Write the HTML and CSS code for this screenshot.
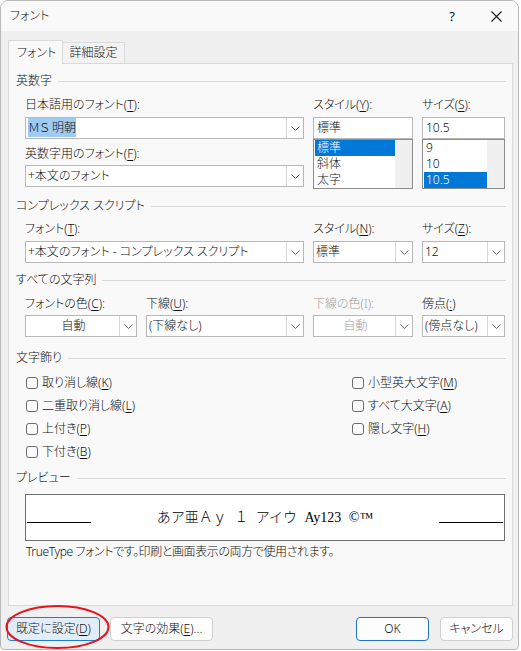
FILE: index.html
```html
<!DOCTYPE html>
<html lang="ja">
<head>
<meta charset="utf-8">
<title>フォント</title>
<link rel="stylesheet" href="styles.css">
</head>
<body>
<div class="window">
  <div class="titlebar">
    <span class="title">フォント</span>
    <span class="tbtn help">?</span>
    <span class="tbtn close"><svg width="11" height="11" viewBox="0 0 11 11"><path d="M0.5 0.5 L10.5 10.5 M10.5 0.5 L0.5 10.5" stroke="#1a1a1a" stroke-width="1.1" fill="none"/></svg></span>
  </div>

  <div class="tabs">
    <div class="tab active">フォント</div>
    <div class="tab">詳細設定</div>
  </div>

  <div class="panel">
    <div class="section-head s1"><span>英数字</span><i class="rule"></i></div>
    <div class="grid g1">
      <label class="wide">日本語用のフォント(<u>T</u>):</label>
      <label>スタイル(<u>Y</u>):</label>
      <label>サイズ(<u>S</u>):</label>

      <div class="combo wide"><span class="val"><span class="sel">ＭＳ 明朝</span></span><span class="btn"><svg width="9" height="5" viewBox="0 0 9 5"><path d="M0.5 0.5 L4.5 4.5 L8.5 0.5" stroke="#666" fill="none"/></svg></span></div>
      <div class="edit">標準</div>
      <div class="edit">10.5</div>

      <label class="wide lbl2">英数字用のフォント(<u>F</u>):</label>
      <div class="list c3"><div class="items"><div class="item on">標準</div><div class="item">斜体</div><div class="item">太字</div></div><div class="scroll"></div></div>
      <div class="list c4"><div class="items"><div class="item">9</div><div class="item">10</div><div class="item on">10.5</div></div><div class="scroll"></div></div>

      <div class="combo wide r4"><span class="val">+本文のフォント</span><span class="btn"><svg width="9" height="5" viewBox="0 0 9 5"><path d="M0.5 0.5 L4.5 4.5 L8.5 0.5" stroke="#666" fill="none"/></svg></span></div>
    </div>

    <div class="section-head s2"><span>コンプレックス スクリプト</span><i class="rule"></i></div>
    <div class="grid g2">
      <label class="wide">フォント(<u>T</u>):</label>
      <label>スタイル(<u>N</u>):</label>
      <label>サイズ(<u>Z</u>):</label>
      <div class="combo wide"><span class="val">+本文のフォント - コンプレックス スクリプト</span><span class="btn"><svg width="9" height="5" viewBox="0 0 9 5"><path d="M0.5 0.5 L4.5 4.5 L8.5 0.5" stroke="#666" fill="none"/></svg></span></div>
      <div class="combo"><span class="val">標準</span><span class="btn"><svg width="9" height="5" viewBox="0 0 9 5"><path d="M0.5 0.5 L4.5 4.5 L8.5 0.5" stroke="#666" fill="none"/></svg></span></div>
      <div class="combo"><span class="val">12</span><span class="btn"><svg width="9" height="5" viewBox="0 0 9 5"><path d="M0.5 0.5 L4.5 4.5 L8.5 0.5" stroke="#666" fill="none"/></svg></span></div>
    </div>

    <div class="section-head s3"><span>すべての文字列</span><i class="rule"></i></div>
    <div class="grid g3">
      <label>フォントの色(<u>C</u>):</label>
      <label>下線(<u>U</u>):</label>
      <label class="disabled">下線の色(I):</label>
      <label>傍点(<u>:</u>)</label>
      <div class="combo"><span class="val center">自動</span><span class="btn"><svg width="9" height="5" viewBox="0 0 9 5"><path d="M0.5 0.5 L4.5 4.5 L8.5 0.5" stroke="#666" fill="none"/></svg></span></div>
      <div class="combo"><span class="val">(下線なし)</span><span class="btn"><svg width="9" height="5" viewBox="0 0 9 5"><path d="M0.5 0.5 L4.5 4.5 L8.5 0.5" stroke="#666" fill="none"/></svg></span></div>
      <div class="combo disabled"><span class="val center">自動</span><span class="btn"><svg width="9" height="5" viewBox="0 0 9 5"><path d="M0.5 0.5 L4.5 4.5 L8.5 0.5" stroke="#666" fill="none"/></svg></span></div>
      <div class="combo"><span class="val">(傍点なし)</span><span class="btn"><svg width="9" height="5" viewBox="0 0 9 5"><path d="M0.5 0.5 L4.5 4.5 L8.5 0.5" stroke="#666" fill="none"/></svg></span></div>
    </div>

    <div class="section-head s4"><span>文字飾り</span><i class="rule"></i></div>
    <div class="checks">
      <div class="check"><i class="box"></i>取り消し線(<u>K</u>)</div>
      <div class="check"><i class="box"></i>二重取り消し線(<u>L</u>)</div>
      <div class="check"><i class="box"></i>上付き(<u>P</u>)</div>
      <div class="check"><i class="box"></i>下付き(<u>B</u>)</div>
      <div class="check"><i class="box"></i>小型英大文字(<u>M</u>)</div>
      <div class="check"><i class="box"></i>すべて大文字(<u>A</u>)</div>
      <div class="check"><i class="box"></i>隠し文字(<u>H</u>)</div>
    </div>

    <div class="section-head s5"><span>プレビュー</span><i class="rule"></i></div>
    <div class="preview">
      <i class="pline"></i>
      <span class="ptext">あア亜Ａｙ １ アイウ Ay123 ©™</span>
      <i class="pline"></i>
    </div>
    <div class="desc">TrueType フォントです。印刷と画面表示の両方で使用されます。</div>
  </div>

  <div class="footer">
    <button class="b-default">既定に設定(<u>D</u>)</button>
    <button class="b-effect">文字の効果(<u>E</u>)...</button>
    <span class="spacer"></span>
    <button class="b-ok">OK</button>
    <button class="b-cancel">キャンセル</button>
  </div>

  <svg class="mark" width="108" height="48" viewBox="0 0 108 48"><ellipse cx="53.5" cy="23" rx="51" ry="21" stroke="#e8141c" stroke-width="2" fill="none"/></svg>
</div>
</body>
</html>
```

FILE: styles.css
```css
* { box-sizing: border-box; }
html, body { margin: 0; padding: 0; }
body {
  background: #ffffff;
  font-family: "Noto Sans", "Noto Sans CJK JP", sans-serif;
  font-feature-settings: "palt";
  font-size: 12px;
  font-weight: 300;
  line-height: 16px;
  color: #111111;
  width: 521px;
  height: 651px;
  overflow: hidden;
}
u { text-decoration: underline; text-underline-offset: 2px; text-decoration-thickness: 1px; }

.window {
  position: relative;
  width: 519px;
  height: 650px;
  border: 1px solid #b9b9b9;
  border-radius: 8px 8px 4px 4px;
  background: #f0f0f0;
  overflow: hidden;
  display: flex;
  flex-direction: column;
}

.titlebar {
  height: 30px;
  background: #f9f9f9;
  display: flex;
  align-items: center;
}
.title { flex: 1; padding-left: 9px; }
.tbtn { width: 42px; height: 30px; display: flex; align-items: center; justify-content: center; }
.help { font-size: 13px; margin-right: 2px; font-weight: 400; }
.close { margin-right: 1px; }

.tabs {
  margin-top: 9px;
  margin-left: 7px;
  display: flex;
  align-items: flex-end;
  height: 23px;
}
.tab {
  height: 21px;
  width: 62px;
  border: 1px solid #dcdcdc;
  border-left: none;
  border-bottom: none;
  background: #f3f3f3;
  line-height: 20px;
  text-align: center;
  white-space: nowrap;
}
.tab.active {
  width: 55px;
  height: 24px;
  margin-bottom: -1px;
  background: #f9f9f9;
  border: 1px solid #d9d9d9;
  border-bottom: none;
  text-align: left;
  padding-left: 8px;
  line-height: 23px;
  position: relative;
  z-index: 1;
}

.panel {
  margin-left: 7px;
  width: 505px;
  height: 543px;
  border: 1px solid #d9d9d9;
  background: #f9f9f9;
  padding: 9px 6px 0 7px;
  display: flex;
  flex-direction: column;
}

.section-head {
  height: 16px;
  display: flex;
  align-items: center;
  white-space: nowrap;
}
.section-head .rule {
  flex: 1;
  height: 1px;
  background: #dadada;
  margin-left: 6px;
}
.s2 { margin-top: 11px; }
.s3 { margin-top: 9px; }
.s4 { margin-top: 13px; }
.s5 { margin-top: 10px; }

.grid {
  margin-left: 9px;
  width: 480px;
  display: grid;
  grid-template-columns: 112px 158px 100px 83px;
  column-gap: 9px;
}
.grid label { display: block; height: 16px; white-space: nowrap; }
.wide { grid-column: 1 / 3; }
.g1 { margin-top: 8px; grid-template-rows: 20px 22px 26px 22px; }
.g1 .lbl2 { grid-row: 3; align-self: end; margin-bottom: 3px; }
.g1 .c3 { grid-column: 3; grid-row: 3 / 5; }
.g1 .c4 { grid-column: 4; grid-row: 3 / 5; }
.g1 .r4 { grid-row: 4; }
.g2 { margin-top: 7px; grid-template-rows: 20px 22px; }
.g3 { margin-top: 8px; grid-template-rows: 19px 22px; }
.disabled { color: #a0a0a0; }

.combo {
  height: 22px;
  border: 1px solid #b8b8b8;
  background: #ffffff;
  display: flex;
}
.combo .val {
  flex: 1;
  padding-left: 2px;
  line-height: 20px;
  white-space: nowrap;
  overflow: hidden;
}
.combo .val.center { text-align: center; }
.combo .btn {
  width: 17px;
  border-left: 1px solid #d6d6d6;
  display: flex;
  align-items: center;
  justify-content: center;
}
.sel { background: #9fcaf1; padding: 1px 0; }

.edit {
  height: 22px;
  border: 1px solid #b8b8b8;
  background: #ffffff;
  padding-left: 3px;
  line-height: 20px;
}

.list {
  height: 50px;
  border: 1px solid #8c8c8c;
  background: #ffffff;
  display: flex;
}
.list .items { flex: 1; padding: 0 0 0 1px; }
.list .item { height: 16px; line-height: 16px; padding-left: 2px; }
.list .item.on { background: #0078d7; color: #ffffff; }
.list .scroll { width: 17px; background: #f0f0f0; }

.checks {
  margin-top: 9px;
  margin-left: 10px;
  display: grid;
  grid-template-columns: 326px 1fr;
  grid-template-rows: repeat(4, 16px);
  row-gap: 7px;
  grid-auto-flow: column;
}
.check { display: flex; align-items: center; white-space: nowrap; }
.check .box {
  width: 12px;
  height: 12px;
  border: 1px solid #6b6b6b;
  border-radius: 3px;
  background: #fbfbfb;
  margin-right: 4px;
}

.preview {
  margin-top: 8px;
  margin-left: 9px;
  width: 480px;
  height: 47px;
  border: 1px solid #6e6e6e;
  background: #ffffff;
  display: flex;
  align-items: center;
  padding: 0 1px;
}
.pline {
  width: 64px;
  height: 1px;
  background: #000000;
  margin-top: 10px;
}
.ptext {
  flex: 1;
  text-align: center;
  font-family: "Liberation Serif", "Noto Sans CJK JP", serif;
  font-feature-settings: normal;
  font-size: 14px;
  font-weight: 300;
  word-spacing: 4px;
  color: #000000;
  margin-top: 1px;
  white-space: pre;
}
.desc { margin-top: 3px; margin-left: 10px; letter-spacing: -0.4px; white-space: nowrap; }

.footer {
  display: flex;
  padding: 11px 5px 0 6px;
}
.footer button {
  height: 24px;
  border: 1px solid #d0d0d0;
  border-radius: 4px;
  background: #fdfdfd;
  font: inherit;
  color: #111111;
  padding: 0;
}
.b-default { width: 93px; background: #e1eefa !important; border-color: #1a7dd6 !important; }
.b-effect { width: 103px; margin-left: 10px; }
.spacer { flex: 1; }
.b-ok { width: 73px; border-color: #1f73c8 !important; }
.b-cancel { width: 73px; margin-left: 11px; }

.mark { position: absolute; left: 3px; top: 603px; }
```
